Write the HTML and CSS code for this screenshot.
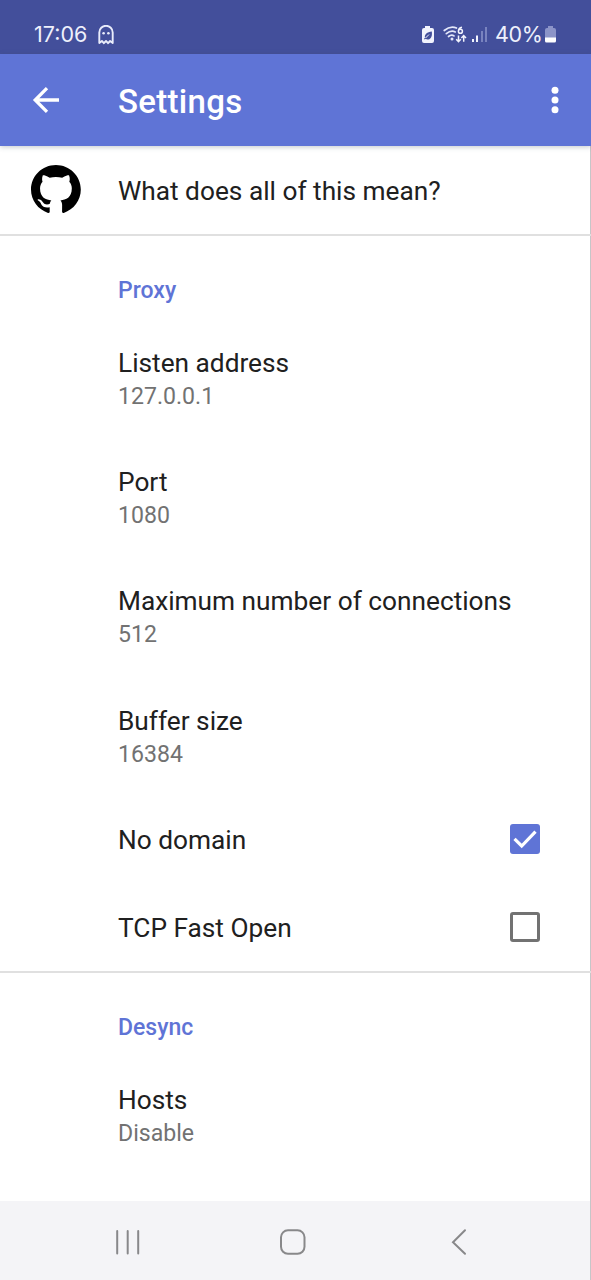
FILE: index.html
```html
<!DOCTYPE html>
<html lang="en">
<head>
<meta charset="utf-8">
<title>Settings</title>
<link rel="stylesheet" href="styles.css">
</head>
<body>
<div class="screen">
  <header class="status">
    <span class="clock">17:06</span>
    <svg class="ghost" width="16" height="20" viewBox="0 0 16 20" fill="none" stroke="#e9ecfb" stroke-width="1.900" stroke-linejoin="round"><path d="M1.300 18V7.500a6.700 6.700 0 0 1 13.400 0V18l-2.600-2-2 2.200L8 16l-2.100 2.200-2-2.200z"/><circle cx="5.600" cy="8.200" r="1.300" fill="#e9ecfb" stroke="none"/><circle cx="10.400" cy="8.200" r="1.300" fill="#e9ecfb" stroke="none"/></svg>
    <div class="indicators">
      <svg width="70" height="22" viewBox="0 0 70 22" fill="none">
        <path fill="#f1f3fd" d="M5 2h5v2h2q2 0 2 2v11q0 2-2 2H4q-2 0-2-2V6q0-2 2-2h1z"/>
        <path fill="#434f9b" d="M11.800 7.500c.6 4-.4 7.500-3.400 8-1.300.2-2.200-.2-2.700-.8l-1 .9-.7-.8 1-1c-.8-3.500 2.200-5.800 6.800-6.300z"/>
        <path stroke="#f1f3fd" stroke-width="1" d="M5.500 14l3.500-3.500"/>
        <g stroke="#e4e8fa" stroke-width="1.700" stroke-linecap="round"><path d="M24.200 6.500q6.300-5.300 12.300-2.500M26.300 9.700q4.600-3.900 9-1.800M28.500 12.500q3-2.500 5.500-.6"/></g>
        <circle cx="32" cy="15" r="1.500" fill="#e4e8fa"/>
        <path stroke="#f1f3fd" stroke-width="1.500" d="M42 3.200q-3.600.7-3.600 4a2 2.100 0 1 0 4 0q0-2-2-2-1.800 0-2 2"/>
        <path stroke="#f1f3fd" stroke-width="1.500" d="M38.500 11.500v6M36.200 15.300l2.300 2.400 2.300-2.400M43.700 17.700v-6M41.400 13.900l2.300-2.400 2.300 2.400"/>
        <path fill="#f1f3fd" d="M52 15h2v3h-2zM56 11.500h2V18h-2z"/>
        <path fill="#7983bf" d="M61 7h2v11h-2zM65 3h2v15h-2z"/>
      </svg>
      <span class="percent">40%</span>
      <svg class="battery" width="13" height="18" viewBox="0 0 13 18"><path fill="#8c94c8" d="M4 0h5v2h1q2 0 2 2v8H1V4q0-2 2-2h1z"/><path fill="#fff" d="M1 11.500h11V15q0 1.500-1.500 1.500h-8Q1 16.500 1 15z"/></svg>
    </div>
  </header>

  <div class="appbar">
    <svg class="back" width="30" height="28" viewBox="0 0 30 28" fill="none" stroke="#fff" stroke-width="3.300"><path d="M28 14H4.500M16 2.200L4.200 14 16 25.800"/></svg>
    <h1 class="title">Settings</h1>
    <svg class="more" width="8" height="28" viewBox="0 0 8 28" fill="#fff"><circle cx="4" cy="4.200" r="3.500"/><circle cx="4" cy="14" r="3.500"/><circle cx="4" cy="23.800" r="3.500"/></svg>
  </div>

  <main class="content">
    <div class="row help">
      <svg class="github" width="50" height="48" viewBox="0 0 98 96" preserveAspectRatio="none"><path d="M48.854 0C21.839 0 0 22 0 49.217c0 21.756 13.993 40.172 33.405 46.690 2.427.49 3.316-1.059 3.316-2.362 0-1.141-.08-5.052-.08-9.127-13.590 2.934-16.420-5.867-16.420-5.867-2.184-5.704-5.420-7.170-5.420-7.170-4.448-3.015.324-3.015.324-3.015 4.934.326 7.523 5.052 7.523 5.052 4.367 7.496 11.404 5.378 14.235 4.074.404-3.178 1.699-5.378 3.074-6.600-10.839-1.141-22.243-5.378-22.243-24.283 0-5.378 1.940-9.778 5.014-13.200-.485-1.222-2.184-6.275.486-13.038 0 0 4.125-1.304 13.426 5.052a46.970 46.970 0 0 1 12.214-1.630c4.125 0 8.330.571 12.213 1.630 9.302-6.356 13.427-5.052 13.427-5.052 2.670 6.763.970 11.816.485 13.038 3.155 3.422 5.015 7.822 5.015 13.200 0 18.905-11.404 23.060-22.324 24.283 1.780 1.548 3.316 4.481 3.316 9.126 0 6.600-.08 11.897-.08 13.526 0 1.304.890 2.853 3.316 2.364 19.412-6.520 33.405-24.935 33.405-46.691C97.707 22 75.788 0 48.854 0z"/></svg>
      <span class="label">What does all of this mean?</span>
    </div>
    <section class="group">
      <h2 class="category">Proxy</h2>
      <div class="pref"><span class="label">Listen address</span><span class="value">127.0.0.1</span></div>
      <div class="pref"><span class="label">Port</span><span class="value">1080</span></div>
      <div class="pref"><span class="label">Maximum number of connections</span><span class="value">512</span></div>
      <div class="pref"><span class="label">Buffer size</span><span class="value">16384</span></div>
      <div class="row"><span class="label">No domain</span><span class="check checked"><svg width="30" height="30" viewBox="0 0 30 30" fill="none" stroke="#fff" stroke-width="3.200"><path d="M4.500 14.800l7.200 7.200L25.500 7.600"/></svg></span></div>
      <div class="row"><span class="label">TCP Fast Open</span><span class="check"></span></div>
    </section>
    <section class="group">
      <h2 class="category">Desync</h2>
      <div class="pref"><span class="label">Hosts</span><span class="value">Disable</span></div>
    </section>
  </main>

  <nav class="navbar">
    <svg width="26" height="26" viewBox="0 0 26 26" stroke="#88888a" stroke-width="2" stroke-linecap="round"><path d="M2.200 2v22.500M12.700 2v22.500M23.200 2v22.500"/></svg>
    <svg class="home" width="26" height="26" viewBox="0 0 26 26" fill="none" stroke="#88888a" stroke-width="2"><rect x="1" y="1.300" width="23.500" height="23.500" rx="7"/></svg>
    <svg width="16" height="28" viewBox="0 0 16 28" fill="none" stroke="#88888a" stroke-width="2" stroke-linecap="round"><path d="M14 2.200L2 14.200l12 11.600"/></svg>
  </nav>
</div>
</body>
</html>
```
FILE: styles.css
```css
* { box-sizing: border-box; }

body {
  margin: 0;
  font-family: Roboto, sans-serif;
  background: #fff;
}

.screen {
  display: flex;
  flex-direction: column;
  width: 591px;
  height: 1280px;
  overflow: hidden;
  box-shadow: inset -1px 0 #c6c6c8;
}

.screen svg { display: block; flex: none; }

.status {
  display: flex;
  align-items: center;
  height: 54px;
  padding: 15px 34px 0 34px;
  background: #434f9b;
  color: #eef0fc;
  font-family: Inter, Roboto, sans-serif;
  font-size: 21.500px;
}

.clock { width: 64px; margin-top: -1px; letter-spacing: 0; }

.indicators {
  display: flex;
  align-items: center;
  margin-left: auto;
}

.percent {
  width: 47px;
  margin: -1px 2px 0 5px;
  letter-spacing: -0.4px;
}

.battery { margin-top: 1px; }

.appbar {
  display: flex;
  align-items: center;
  height: 92px;
  flex: none;
  padding: 0 32px 0 31px;
  background: #5f74d6;
  color: #fff;
  box-shadow: 0 1px 5px rgba(60, 80, 90, 0.3);
}

.title {
  margin: 3px auto 0 57px;
  font-size: 33px;
  font-weight: 500;
  letter-spacing: 0.3px;
}

.content { flex: 1; }

.row {
  display: flex;
  align-items: center;
  height: 88px;
  padding: 0 51px 0 118px;
}

.help { padding-left: 31px; }
.github { margin: -2px 37px 0 0; }

.label {
  color: #202020;
  font-size: 26.250px;
  line-height: 31px;
}

.row .label { margin-top: 3px; }
.help .label { margin-top: 2px; }

.group { border-top: 2px solid #e0e0e0; }

.category {
  height: 84px;
  margin: 0;
  padding: 41px 0 0 118px;
  color: #5f74d6;
  font-size: 23px;
  font-weight: 500;
  line-height: 27px;
}

.pref {
  display: flex;
  flex-direction: column;
  height: 119.200px;
  padding: 28px 0 0 118px;
}

.pref + .row { margin-top: -2px; }

.value {
  margin-top: 4px;
  color: #727272;
  font-size: 23.100px;
  line-height: 27px;
}

.check {
  width: 30px;
  height: 30px;
  margin-left: auto;
  border: 3px solid #727272;
  border-radius: 3px;
}

.checked { border: 0; background: #5f74d6; }

.navbar {
  display: flex;
  align-items: center;
  justify-content: space-between;
  height: 79px;
  padding: 3px 124px 0 115px;
  background: #f4f4f7;
  box-shadow: inset -1px 0 #c6c6c8;
}

.home { margin-right: 7px; }
```
